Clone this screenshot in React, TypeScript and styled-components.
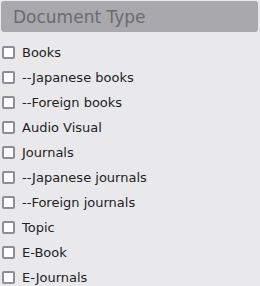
import styled, { createGlobalStyle } from "styled-components"

const GlobalStyle = createGlobalStyle`
    body {
        margin: 0;
        background: #e9e9eb;
        font-family: "DejaVu Sans", Verdana, sans-serif;
    }
`

const Panel = styled.div`
    width: 260px;
    height: 286px;
    box-sizing: border-box;
    padding: 1px 2px 0 1px;
    background: #e9e9eb;
    overflow: hidden;
`

const Header = styled.div`
    height: 31px;
    display: flex;
    align-items: center;
    padding-left: 12px;
    border-radius: 3px;
    background: #a9a8ad;
    color: #6c6b71;
    font-size: 17px;
`

const List = styled.ul`
    list-style: none;
    margin: 0;
    padding: 8px 0 0 1px;
    display: flex;
    flex-direction: column;
`

const Row = styled.li`
    height: 25px;
    display: flex;
    align-items: center;
    gap: 7px;
    font-size: 13px;
    color: #222;
`

const Box = styled.span`
    width: 13px;
    height: 13px;
    box-sizing: border-box;
    border: 2px solid #8f8d97;
    border-radius: 2px;
    background: #fff;
    flex-shrink: 0;
`

const items = [
    "Books",
    "--Japanese books",
    "--Foreign books",
    "Audio Visual",
    "Journals",
    "--Japanese journals",
    "--Foreign journals",
    "Topic",
    "E-Book",
    "E-Journals",
]

export default function App() {
    return (
        <>
            <GlobalStyle />
            <Panel>
                <Header>Document Type</Header>
                <List>
                    {items.map(item => (
                        <Row key={item}>
                            <Box />
                            {item}
                        </Row>
                    ))}
                </List>
            </Panel>
        </>
    )
}
